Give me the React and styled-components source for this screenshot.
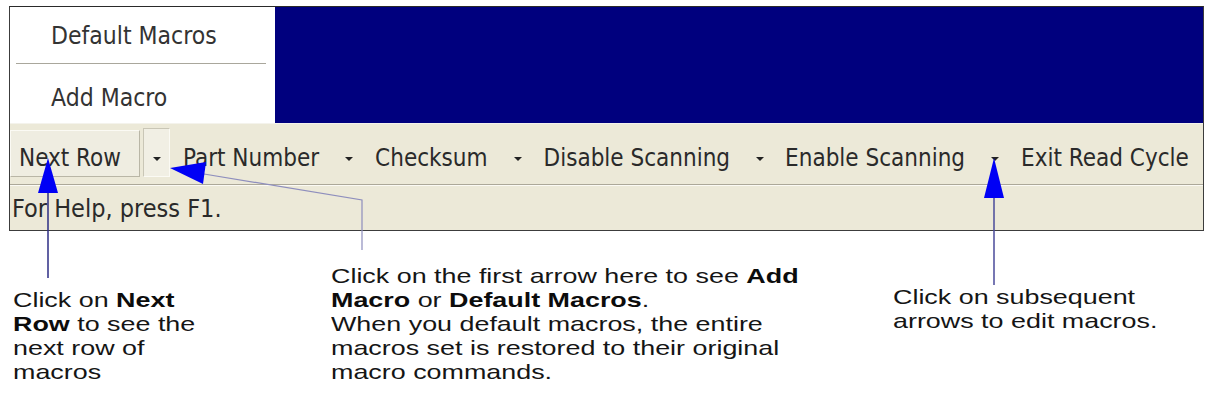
import React from "react";
import styled, { createGlobalStyle } from "styled-components";

const Global = createGlobalStyle`
  html, body { margin: 0; padding: 0; background: #ffffff; }
  body { width: 1209px; height: 412px; overflow: hidden; }
`;

const Page = styled.div`
  position: relative;
  width: 1209px;
  height: 412px;
  padding-top: 6px;
  box-sizing: border-box;
  background: #fff;
  overflow: hidden;
`;

const Window = styled.div`
  margin-left: 9px;
  width: 1195px;
  box-sizing: border-box;
  border: 1px solid #3c3c3c;
  border-top-color: #2a2a2a;
  background: #ece9d8;
  font-family: "DejaVu Sans Condensed", "DejaVu Sans", sans-serif;
  font-stretch: condensed;
  font-size: 24px;
  color: #2a2a2a;
`;

const TopArea = styled.div`
  display: flex;
  height: 117px;
  box-sizing: border-box;
  border-bottom: 1px solid #f4f3ec;
`;

const MenuPanel = styled.div`
  width: 265px;
  background: #ffffff;
  display: flex;
  flex-direction: column;
`;

const MenuItem = styled.div`
  height: ${(p) => p.$h}px;
  padding-top: ${(p) => p.$pt || 0}px;
  box-sizing: border-box;
  padding-left: 41px;
  display: flex;
  align-items: center;
  white-space: nowrap;
  font-size: 24.5px;
  color: #333;
`;

const MenuSeparator = styled.div`
  height: 1px;
  margin: 0 9px 0 6px;
  background: #a9a79c;
`;

const NavyFill = styled.div`
  flex: 1;
  background: #00007e;
`;

const Toolbar = styled.div`
  display: flex;
  align-items: flex-start;
  height: 61px;
  padding-top: 4px;
  box-sizing: border-box;
  border-bottom: 1px solid #aca899;
  white-space: nowrap;
`;

const NextRowButton = styled.div`
  margin-top: 2px;
  width: 130px;
  height: 47px;
  box-sizing: border-box;
  padding: 8px 0 0 8px;
  display: flex;
  align-items: center;
  background: #efede1;
  border: 1px solid;
  border-color: #fbfaf4 #b9b6a6 #b9b6a6 #fbfaf4;
`;

const DropButton = styled.div`
  margin-left: 3px;
  width: 27px;
  height: 49px;
  box-sizing: border-box;
  padding-top: 12px;
  display: flex;
  align-items: center;
  justify-content: center;
  background: #f1efe4;
  border: 1px solid;
  border-color: #c9c6b6 #fbfaf4 #fbfaf4 #c9c6b6;
`;

const ToolLabel = styled.div`
  height: 49px;
  box-sizing: border-box;
  padding-top: 10px;
  margin-left: ${(p) => p.$ml}px;
  display: flex;
  align-items: center;
`;

const ArrowSlot = styled.div`
  height: 49px;
  width: 20px;
  box-sizing: border-box;
  padding-top: 12px;
  margin-left: 20px;
  display: flex;
  align-items: center;
  justify-content: center;
`;

const Caret = styled.span`
  width: 0;
  height: 0;
  border-left: 4px solid transparent;
  border-right: 4px solid transparent;
  border-top: 4px solid #222;
`;

const StatusBar = styled.div`
  height: 45px;
  box-sizing: border-box;
  border-top: 1px solid #fbfaf4;
  padding-left: 2px;
  display: flex;
  align-items: center;
  white-space: nowrap;
  font-size: 25px;
`;

const Notes = styled.div`
  display: grid;
  grid-template-columns: 318px 562px 1fr;
  padding-left: 13px;
  margin-top: 33px;
  font-family: "Liberation Sans", Arial, sans-serif;
  font-size: 21px;
  line-height: 24px;
  color: #151515;
`;

const Note = styled.div`
  justify-self: start;
  padding-top: ${(p) => p.$pt || 0}px;
  white-space: nowrap;
  transform: scaleX(1.28);
  transform-origin: left top;
  b { font-weight: bold; color: #0c0c0c; }
`;

const Overlay = styled.svg`
  position: absolute;
  left: 0;
  top: 0;
  pointer-events: none;
`;

const macros = [
  { label: "Part Number", ml: 13 },
  { label: "Checksum", ml: 16 },
  { label: "Disable Scanning", ml: 16 },
  { label: "Enable Scanning", ml: 15 },
  { label: "Exit Read Cycle", ml: 16, last: true },
];

export default function App() {
  return (
    <>
      <Global />
      <Page>
        <Window>
          <TopArea>
            <MenuPanel>
              <MenuItem $h={56}>Default Macros</MenuItem>
              <MenuSeparator />
              <MenuItem $h={59} $pt={8}>Add Macro</MenuItem>
            </MenuPanel>
            <NavyFill />
          </TopArea>
          <Toolbar>
            <NextRowButton>Next Row</NextRowButton>
            <DropButton>
              <Caret />
            </DropButton>
            {macros.map((m) => (
              <React.Fragment key={m.label}>
                <ToolLabel $ml={m.ml}>{m.label}</ToolLabel>
                {!m.last && (
                  <ArrowSlot>
                    <Caret />
                  </ArrowSlot>
                )}
              </React.Fragment>
            ))}
          </Toolbar>
          <StatusBar>For Help, press F1.</StatusBar>
        </Window>
        <Notes>
          <Note $pt={24}>
            Click on <b>Next</b>
            <br />
            <b>Row</b> to see the
            <br />
            next row of
            <br />
            macros
          </Note>
          <Note>
            Click on the first arrow here to see <b>Add</b>
            <br />
            <b>Macro</b> or <b>Default Macros</b>.
            <br />
            When you default macros, the entire
            <br />
            macros set is restored to their original
            <br />
            macro commands.
          </Note>
          <Note $pt={21}>
            Click on subsequent
            <br />
            arrows to edit macros.
          </Note>
        </Notes>
        <Overlay width="1209" height="412" viewBox="0 0 1209 412">
          <line x1="48" y1="190" x2="48" y2="278" stroke="#2d2d85" strokeWidth="1.5" />
          <polygon points="48,158 38,193 58,193" fill="#0000f5" />
          <polyline points="362,250 362,200 204,174" fill="none" stroke="#8e8ebd" strokeWidth="1.2" />
          <polygon points="170,168 206,162 203,184" fill="#0000f5" />
          <line x1="994" y1="195" x2="994" y2="285" stroke="#4a4a9a" strokeWidth="1.5" />
          <polygon points="994,158 984,198 1004,198" fill="#0000f5" />
        </Overlay>
      </Page>
    </>
  );
}
